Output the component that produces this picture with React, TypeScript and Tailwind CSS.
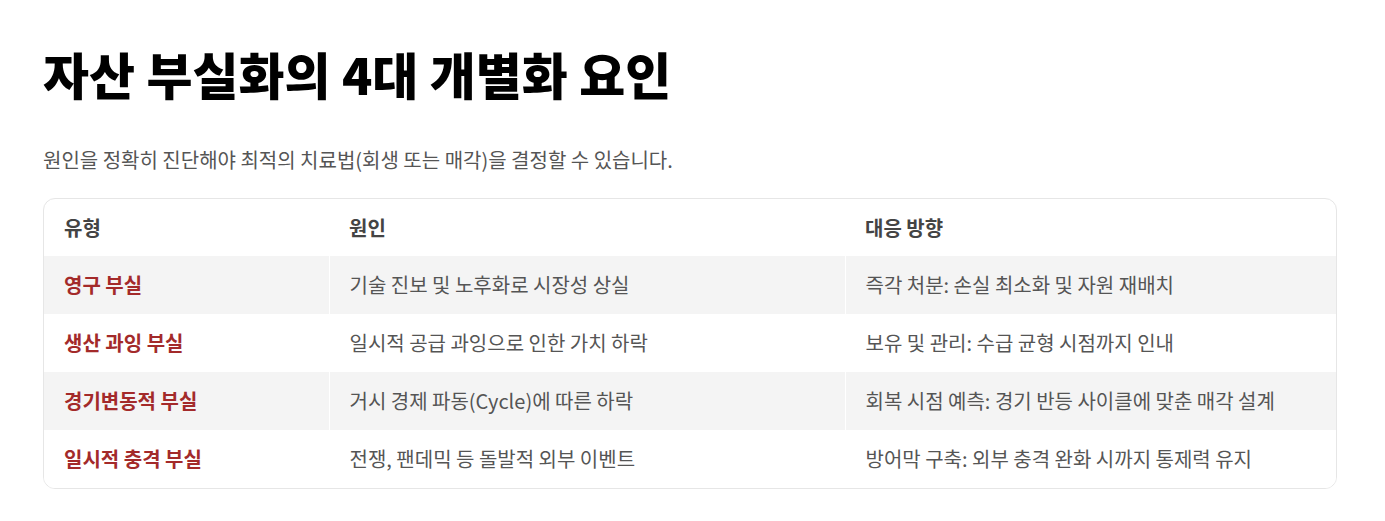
const rows = [
  {
    type: "영구 부실",
    cause: "기술 진보 및 노후화로 시장성 상실",
    action: "즉각 처분: 손실 최소화 및 자원 재배치",
  },
  {
    type: "생산 과잉 부실",
    cause: "일시적 공급 과잉으로 인한 가치 하락",
    action: "보유 및 관리: 수급 균형 시점까지 인내",
  },
  {
    type: "경기변동적 부실",
    cause: "거시 경제 파동(Cycle)에 따른 하락",
    action: "회복 시점 예측: 경기 반등 사이클에 맞춘 매각 설계",
  },
  {
    type: "일시적 충격 부실",
    cause: "전쟁, 팬데믹 등 돌발적 외부 이벤트",
    action: "방어막 구축: 외부 충격 완화 시까지 통제력 유지",
  },
];

export default function App() {
  return (
    <div
      className="min-h-screen bg-white px-[43px] pt-[43px]"
      style={{ fontFamily: '"Noto Sans CJK KR", "Noto Sans", sans-serif' }}
    >
      <h1 className="text-[50px] font-black leading-[60px] text-black">
        자산 부실화의 4대 개별화 요인
      </h1>
      <p className="mt-[42px] text-[20px] leading-[30px] text-[#555]">
        원인을 정확히 진단해야 최적의 치료법(회생 또는 매각)을 결정할 수 있습니다.
      </p>

      {/* 표 */}
      <div className="mt-[23px] w-[1294px] overflow-hidden rounded-[12px] border border-[#e6e6e6]">
        <table className="w-full border-collapse text-[20px]">
          <thead>
            <tr className="h-[57px] text-left">
              <th className="w-[285px] px-[20px] font-bold text-[#444]">유형</th>
              <th className="w-[516px] px-[20px] font-bold text-[#444]">원인</th>
              <th className="px-[20px] font-bold text-[#444]">대응 방향</th>
            </tr>
          </thead>
          <tbody>
            {rows.map((row, i) => (
              <tr
                key={row.type}
                className={i % 2 === 0 ? "h-[58px] bg-[#f4f4f4]" : "h-[58px] bg-white"}
              >
                <td className="border-r border-white px-[20px] font-bold text-[#a32a2a]">
                  {row.type}
                </td>
                <td className="border-r border-white px-[20px] text-[#555]">
                  {row.cause}
                </td>
                <td className="px-[20px] text-[#555]">{row.action}</td>
              </tr>
            ))}
          </tbody>
        </table>
      </div>
    </div>
  );
}
